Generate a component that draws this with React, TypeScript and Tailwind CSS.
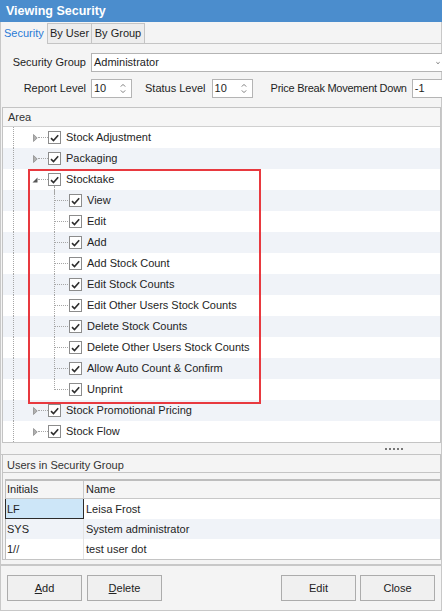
import React from "react";

type TreeNode = {
  label: string;
  level: 0 | 1;
  kind?: "closed" | "open";
  last?: boolean;
};

const tree: TreeNode[] = [
  { label: "Stock Adjustment", level: 0, kind: "closed" },
  { label: "Packaging", level: 0, kind: "closed" },
  { label: "Stocktake", level: 0, kind: "open" },
  { label: "View", level: 1 },
  { label: "Edit", level: 1 },
  { label: "Add", level: 1 },
  { label: "Add Stock Count", level: 1 },
  { label: "Edit Stock Counts", level: 1 },
  { label: "Edit Other Users Stock Counts", level: 1 },
  { label: "Delete Stock Counts", level: 1 },
  { label: "Delete Other Users Stock Counts", level: 1 },
  { label: "Allow Auto Count & Confirm", level: 1 },
  { label: "Unprint", level: 1, last: true },
  { label: "Stock Promotional Pricing", level: 0, kind: "closed" },
  { label: "Stock Flow", level: 0, kind: "closed" },
];

const users = [
  { initials: "LF", name: "Leisa Frost" },
  { initials: "SYS", name: "System administrator" },
  { initials: "1//", name: "test user dot" },
];

function Check() {
  return (
    <span className="flex h-[13px] w-[13px] shrink-0 items-center justify-center border border-[#8c8c8c] bg-white">
      <svg width="9" height="8" viewBox="0 0 9 8">
        <path d="M1 4.1 L3.5 6.6 L8.2 1.3" fill="none" stroke="#2e2e2e" strokeWidth="1.6" />
      </svg>
    </span>
  );
}

function Spin({ value }: { value: string }) {
  return (
    <div className="flex h-[19px] w-[41px] shrink-0 items-center justify-between border border-[#b4b4b4] bg-white pl-[2px] pr-[5px]">
      <span>{value}</span>
      <svg width="6" height="11" viewBox="0 0 6 11">
        <path d="M0.8 3.6 L3 1.4 L5.2 3.6" fill="none" stroke="#7c7c7c" strokeWidth="1" />
        <path d="M0.8 7.4 L3 9.6 L5.2 7.4" fill="none" stroke="#7c7c7c" strokeWidth="1" />
      </svg>
    </div>
  );
}

function Expander({ kind }: { kind?: "closed" | "open" }) {
  if (kind === "open") {
    return (
      <svg width="6" height="6" viewBox="0 0 6 6">
        <polygon points="5.5,0.5 5.5,5.5 0.5,5.5" fill="#575757" />
      </svg>
    );
  }
  return (
    <svg width="5" height="8" viewBox="0 0 5 8">
      <polygon points="0.5,0.5 4.2,4 0.5,7.5" fill="#b0b0b0" stroke="#8e8e8e" strokeWidth="0.8" />
    </svg>
  );
}

function TreeRow({ node, index }: { node: TreeNode; index: number }) {
  const shade = index % 2 === 1 ? "bg-[#f0f3f8]" : "bg-white";
  return (
    <div className={`flex h-[21px] items-center ${shade}`}>
      <div className="ml-[10px] w-px self-stretch border-l border-dotted border-[#a6a6a6]" />
      {node.level === 0 ? (
        <>
          <div className="ml-[18px] flex w-[6px] items-center justify-center">
            <Expander kind={node.kind} />
          </div>
          <div className="w-[10px] border-t border-dotted border-[#a6a6a6]" />
          <span className="relative">
            <Check />
            {node.kind === "open" && (
              <span className="absolute left-[6px] top-[13px] h-[8px] border-l border-dotted border-[#a6a6a6]" />
            )}
          </span>
          <span className="ml-[5px] whitespace-nowrap">{node.label}</span>
        </>
      ) : (
        <>
          <div
            className={`ml-[40px] w-px border-l border-dotted border-[#a6a6a6] ${
              node.last ? "h-[11px] self-start" : "self-stretch"
            }`}
          />
          <div className="w-[13px] border-t border-dotted border-[#a6a6a6]" />
          <span className="ml-[1px]">
            <Check />
          </span>
          <span className="ml-[5px] whitespace-nowrap">{node.label}</span>
        </>
      )}
    </div>
  );
}

function Button({ children }: { children: React.ReactNode }) {
  return (
    <button className="flex h-[26px] w-[75px] items-center justify-center border border-[#acacac] bg-[#f0f0f0] text-[#222]">
      {children}
    </button>
  );
}

export default function App() {
  return (
    <div
      className="flex h-[611px] w-[442px] flex-col overflow-hidden bg-[#f4f4f4] text-[11px] text-[#1e1e1e]"
      style={{ fontFamily: '"Liberation Sans", Arial, sans-serif' }}
    >
      {/* title */}
      <div className="flex h-[22px] shrink-0 items-center bg-[#4b8dcd] pl-[6px] text-[12.5px] font-bold text-white">
        Viewing Security
      </div>

      <div className="flex flex-1 flex-col border-x border-b border-[#c8c8c8]">
        {/* tabs */}
        <div className="flex h-[22px] shrink-0 items-end">
          <div className="flex h-[22px] w-[46px] shrink-0 items-center pl-[3px] pt-[1px] text-[#2a7bd6]">Security</div>
          <div className="flex h-[20px] flex-1 items-end border-b border-[#c4c4c4]">
            <div className="flex h-[20px] w-[45px] items-center justify-center border border-b-0 border-[#c4c4c4] bg-[#ededed]">
              By User
            </div>
            <div className="flex h-[20px] w-[53px] items-center justify-center border border-b-0 border-l-0 border-[#c4c4c4] bg-[#ededed]">
              By Group
            </div>
          </div>
        </div>

        {/* form */}
        <div className="mt-[9px] flex shrink-0 items-center">
          <span className="w-[85px] shrink-0 whitespace-nowrap text-right">Security Group</span>
          <div className="ml-[5px] flex h-[19px] w-[355px] shrink-0 items-center justify-between border border-[#b4b4b4] bg-white pl-[2px] pr-[5px]">
            <span>Administrator</span>
            <svg width="4" height="4" viewBox="0 0 4 4">
              <path d="M0.3 0.8 L2 3 L3.7 0.8" fill="none" stroke="#8a8a8a" strokeWidth="0.9" />
            </svg>
          </div>
        </div>
        <div className="mt-[7px] flex shrink-0 items-center">
          <span className="w-[85px] shrink-0 whitespace-nowrap text-right">Report Level</span>
          <div className="ml-[5px]">
            <Spin value="10" />
          </div>
          <span className="ml-[13px] shrink-0 whitespace-nowrap">Status Level</span>
          <div className="ml-[6px]">
            <Spin value="10" />
          </div>
          <span className="ml-[18px] shrink-0 whitespace-nowrap tracking-[-0.25px]">Price Break Movement Down</span>
          <div className="ml-[5px] flex h-[19px] w-[60px] shrink-0 items-center border border-[#b4b4b4] bg-white pl-[2px]">
            -1
          </div>
        </div>

        {/* tree */}
        <div className="ml-[1px] mt-[9px] shrink-0 border border-[#c4c4c4] bg-white">
          <div className="flex h-[19px] items-center border-b border-[#d0d0d0] bg-[#f6f6f6] pl-[5px] pt-[1px] text-[#333]">
            Area
          </div>
          <div className="relative">
            {tree.map((node, i) => (
              <TreeRow key={node.label} node={node} index={i} />
            ))}
            <div className="pointer-events-none absolute left-[25px] top-[42px] h-[235px] w-[233px] border-2 border-[#e8393f]" />
          </div>
        </div>

        {/* splitter */}
        <div className="flex h-[12px] shrink-0 items-center justify-end border-b border-[#c4c4c4] pr-[38px]">
          <div className="flex gap-[2px]">
            <span className="h-[2px] w-[2px] bg-[#767676]" />
            <span className="h-[2px] w-[2px] bg-[#767676]" />
            <span className="h-[2px] w-[2px] bg-[#767676]" />
            <span className="h-[2px] w-[2px] bg-[#767676]" />
            <span className="h-[2px] w-[2px] bg-[#767676]" />
          </div>
        </div>

        {/* users */}
        <div className="ml-[1px] flex shrink-0 flex-col border-x border-b border-[#c4c4c4]">
          <div className="flex h-[18px] items-center border-b border-[#c4c4c4] pl-[4px] pt-[3px] text-[#333]">
            Users in Security Group
          </div>
          <div className="ml-[2px] mt-[6px] border-l border-t-2 border-[#bdbdbd] bg-white">
            <div className="flex h-[18px] items-center border-b border-[#c8c8c8] bg-[#f5f5f5]">
              <div className="flex h-full w-[78px] items-center border-r border-[#c8c8c8] pl-[1px]">Initials</div>
              <div className="pl-[2px]">Name</div>
            </div>
            {users.map((u, i) => (
              <div
                key={u.initials}
                className={`flex h-[20px] items-center ${i === 1 ? "bg-[#f0f3f8]" : "bg-white"}`}
              >
                <div
                  className={`flex h-full w-[78px] items-center border-r pl-[1px] ${
                    i === 0
                      ? "border-[#2b2b2b] bg-[#cde6f8] shadow-[inset_0_-1px_0_#2b2b2b,-1px_0_0_#2b2b2b]"
                      : "border-[#e4e4e4]"
                  }`}
                >
                  {u.initials}
                </div>
                <div className="pl-[2px]">{u.name}</div>
              </div>
            ))}
          </div>
        </div>

        {/* buttons */}
        <div className="mt-[4px] flex flex-1 items-start border-t-2 border-[#c8c8c8] px-[6px] pt-[9px]">
          <Button>
            <span>
              <span className="underline">A</span>dd
            </span>
          </Button>
          <div className="ml-[5px]">
            <Button>
              <span>
                <span className="underline">D</span>elete
              </span>
            </Button>
          </div>
          <div className="ml-auto flex gap-[4px]">
            <Button>Edit</Button>
            <Button>Close</Button>
          </div>
        </div>
      </div>
    </div>
  );
}
